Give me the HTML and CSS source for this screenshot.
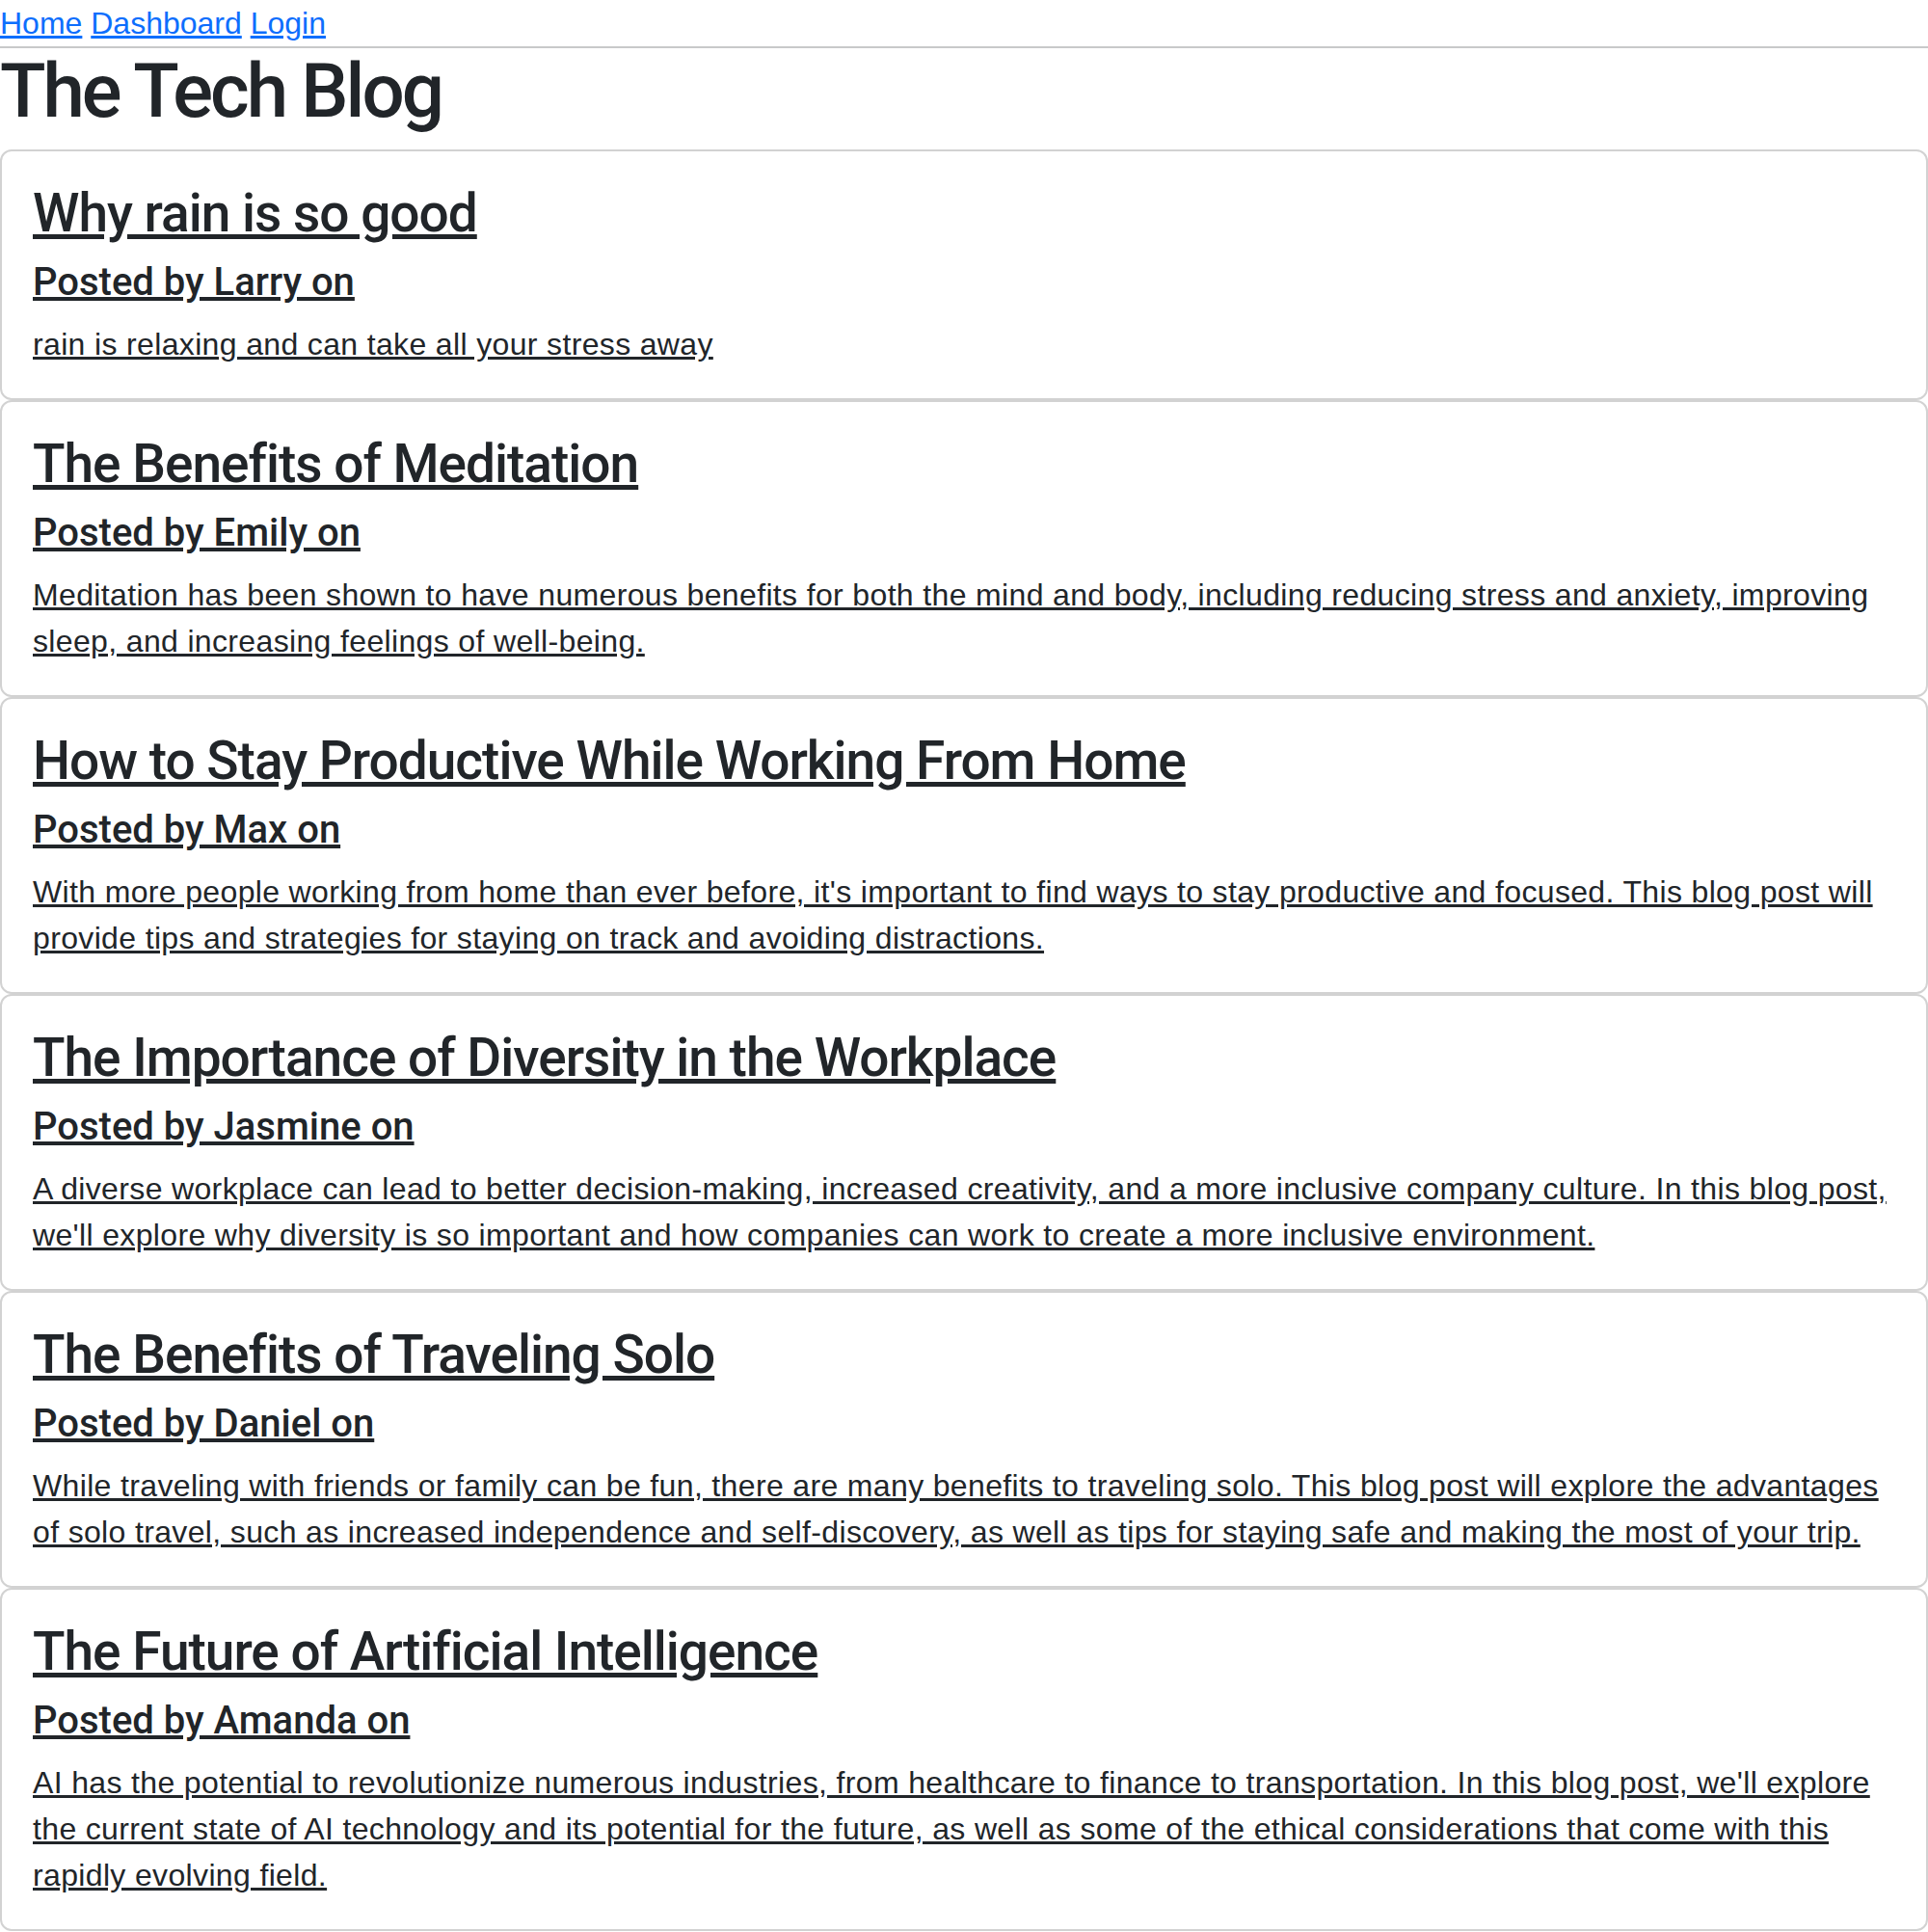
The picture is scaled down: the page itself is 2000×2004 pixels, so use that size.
FILE: index.html
```html
<!DOCTYPE html>
<html lang="en">
<head>
<meta charset="utf-8">
<title>The Tech Blog</title>
<link rel="stylesheet" href="styles.css">
</head>
<body>
<nav class="topnav">
  <a class="navlink" href="#">Home</a>
  <a class="navlink" href="#">Dashboard</a>
  <a class="navlink" href="#">Login</a>
</nav>
<hr class="rule">
<h1 class="site-title">The Tech Blog</h1>
<main class="posts">
  <a class="card" href="#">
    <h3 class="card-title">Why rain is so good</h3>
    <h5 class="card-meta">Posted by Larry on</h5>
    <p class="card-text">rain is relaxing and can take all your stress away</p>
  </a>
  <a class="card" href="#">
    <h3 class="card-title">The Benefits of Meditation</h3>
    <h5 class="card-meta">Posted by Emily on</h5>
    <p class="card-text">Meditation has been shown to have numerous benefits for both the mind and body, including reducing stress and anxiety, improving sleep, and increasing feelings of well-being.</p>
  </a>
  <a class="card" href="#">
    <h3 class="card-title">How to Stay Productive While Working From Home</h3>
    <h5 class="card-meta">Posted by Max on</h5>
    <p class="card-text">With more people working from home than ever before, it's important to find ways to stay productive and focused. This blog post will provide tips and strategies for staying on track and avoiding distractions.</p>
  </a>
  <a class="card" href="#">
    <h3 class="card-title">The Importance of Diversity in the Workplace</h3>
    <h5 class="card-meta">Posted by Jasmine on</h5>
    <p class="card-text">A diverse workplace can lead to better decision-making, increased creativity, and a more inclusive company culture. In this blog post, we'll explore why diversity is so important and how companies can work to create a more inclusive environment.</p>
  </a>
  <a class="card" href="#">
    <h3 class="card-title">The Benefits of Traveling Solo</h3>
    <h5 class="card-meta">Posted by Daniel on</h5>
    <p class="card-text">While traveling with friends or family can be fun, there are many benefits to traveling solo. This blog post will explore the advantages of solo travel, such as increased independence and self-discovery, as well as tips for staying safe and making the most of your trip.</p>
  </a>
  <a class="card" href="#">
    <h3 class="card-title">The Future of Artificial Intelligence</h3>
    <h5 class="card-meta">Posted by Amanda on</h5>
    <p class="card-text">AI has the potential to revolutionize numerous industries, from healthcare to finance to transportation. In this blog post, we'll explore the current state of AI technology and its potential for the future, as well as some of the ethical considerations that come with this rapidly evolving field.</p>
  </a>
</main>
</body>
</html>
```

FILE: styles.css
```css
* {
  box-sizing: border-box;
}

html, body {
  margin: 0;
  padding: 0;
  background: #ffffff;
}

body {
  font-family: "Liberation Sans", Arial, sans-serif;
  font-size: 32px;
  line-height: 48px;
  color: #212529;
}

.topnav {
  height: 48px;
  line-height: 48px;
}

.navlink {
  color: #0d6efd;
  text-decoration: underline;
}

.rule {
  margin: 0;
  border: 0;
  border-top: 2px solid #c8c9ca;
  height: 0;
}

.site-title {
  margin: 0 0 15px 0;
  font-family: Roboto, "Liberation Sans", sans-serif;
  font-size: 78px;
  line-height: 90px;
  font-weight: 500;
  letter-spacing: -3px;
}

.posts {
  display: flex;
  flex-direction: column;
}

.card {
  display: block;
  border: 2px solid #d2d2d2;
  border-radius: 12px;
  padding: 32px;
  color: #212529;
  text-decoration: underline;
}

.card-title {
  margin: 0 0 16px 0;
  font-family: Roboto, "Liberation Sans", sans-serif;
  font-size: 55px;
  line-height: 64px;
  font-weight: 500;
  letter-spacing: -1px;
}

.card-meta {
  margin: 0 0 16px 0;
  font-family: Roboto, "Liberation Sans", sans-serif;
  font-size: 40px;
  line-height: 48px;
  font-weight: 500;
}

.card-text {
  margin: 0;
  font-size: 32px;
  line-height: 48px;
  letter-spacing: 0.35px;
}
```
